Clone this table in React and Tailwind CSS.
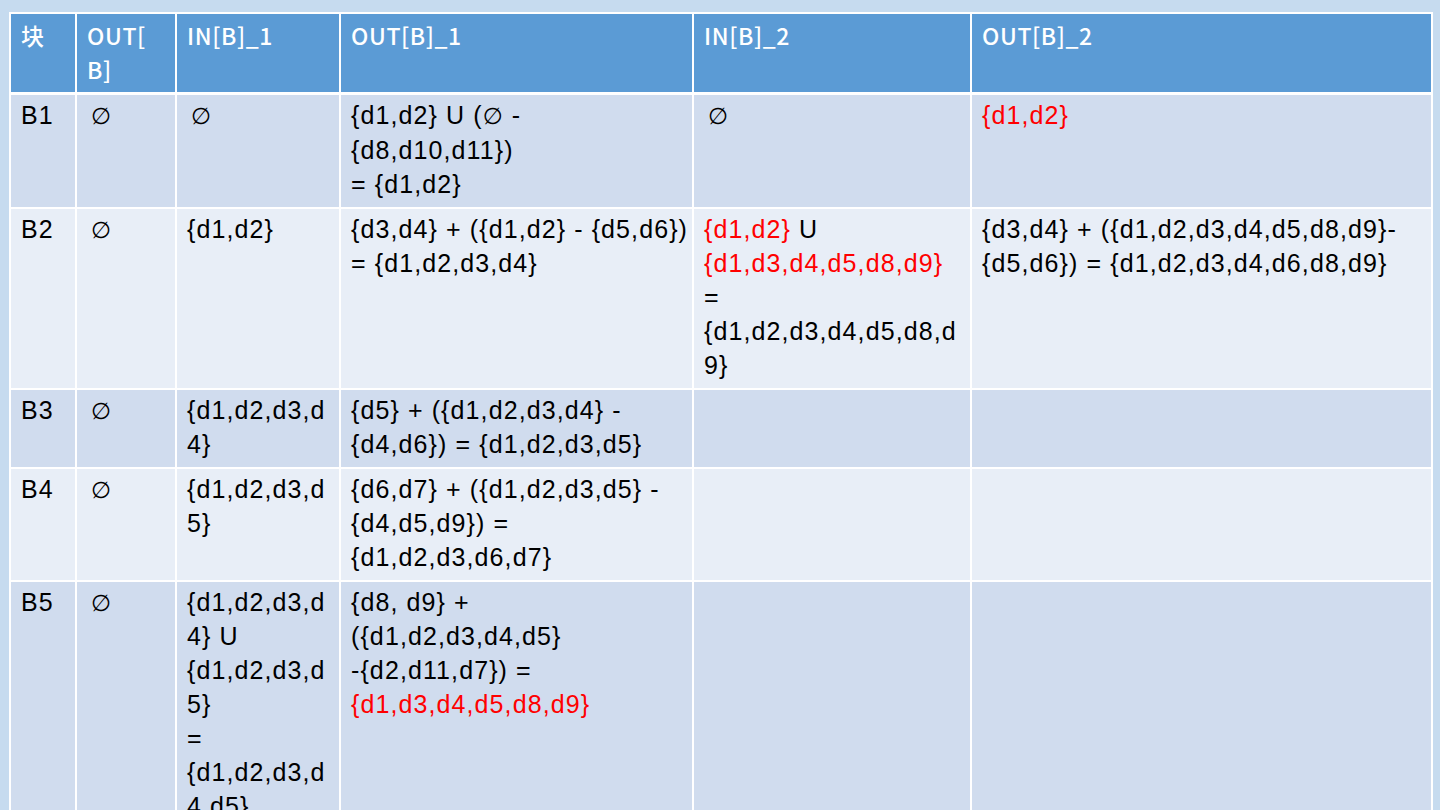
import React from 'react';

const R = ({ children }) => <span className="text-[#ff0000]">{children}</span>;
const E = () => <span className="ml-[4px] text-[23px]">∅</span>;

const headers = ['块', ['OUT[', 'B]'], 'IN[B]_1', 'OUT[B]_1', 'IN[B]_2', 'OUT[B]_2'];

// each cell is a list of lines so the wrapping matches the slide
const rows = [
  {
    bg: 'bg-[#d0dcee]',
    cells: [
      ['B1'],
      [<E />],
      [<E />],
      [<>{'{d1,d2} U ('}<span className="text-[23px]">∅</span>{' -'}</>, '{d8,d10,d11})', '= {d1,d2}'],
      [<E />],
      [<R>{'{d1,d2}'}</R>],
    ],
  },
  {
    bg: 'bg-[#e8eef7]',
    cells: [
      ['B2'],
      [<E />],
      ['{d1,d2}'],
      ['{d3,d4} + ({d1,d2} - {d5,d6})', '= {d1,d2,d3,d4}'],
      [
        <><R>{'{d1,d2}'}</R> U</>,
        <R>{'{d1,d3,d4,d5,d8,d9}'}</R>,
        '=',
        '{d1,d2,d3,d4,d5,d8,d',
        '9}',
      ],
      ['{d3,d4} + ({d1,d2,d3,d4,d5,d8,d9}-', '{d5,d6}) = {d1,d2,d3,d4,d6,d8,d9}'],
    ],
  },
  {
    bg: 'bg-[#d0dcee]',
    cells: [
      ['B3'],
      [<E />],
      ['{d1,d2,d3,d', '4}'],
      ['{d5} + ({d1,d2,d3,d4} -', '{d4,d6}) = {d1,d2,d3,d5}'],
      [],
      [],
    ],
  },
  {
    bg: 'bg-[#e8eef7]',
    cells: [
      ['B4'],
      [<E />],
      ['{d1,d2,d3,d', '5}'],
      ['{d6,d7} + ({d1,d2,d3,d5} -', '{d4,d5,d9}) =', '{d1,d2,d3,d6,d7}'],
      [],
      [],
    ],
  },
  {
    bg: 'bg-[#d0dcee]',
    cells: [
      ['B5'],
      [<E />],
      ['{d1,d2,d3,d', '4} U', '{d1,d2,d3,d', '5}', '=', '{d1,d2,d3,d', '4,d5}'],
      ['{d8, d9} +', '({d1,d2,d3,d4,d5}', '-{d2,d11,d7}) =', <R>{'{d1,d3,d4,d5,d8,d9}'}</R>],
      [],
      [],
    ],
  },
];

const widths = ['w-[66px]', 'w-[100px]', 'w-[164px]', 'w-[353px]', 'w-[278px]', 'w-[461px]'];

export default function App() {
  return (
    <div className="h-[810px] w-[1440px] overflow-hidden bg-[#c6dbef] pl-[9px] pt-[12px]">
      <table className="table-fixed border-collapse border-2 border-white w-[1424px]">
        <colgroup>
          {widths.map((w, i) => (
            <col key={i} className={w} />
          ))}
        </colgroup>
        <thead>
          <tr className="bg-[#5b9bd5]">
            {headers.map((h, i) => (
              <th
                key={i}
                className="border-2 border-b-[3px] border-white px-[10px] pt-[4px] pb-[6px] text-left align-top text-[23px] font-medium leading-[34px] tracking-[0.6px] text-white"
                style={{ fontFamily: '"Noto Sans CJK SC", "Noto Sans", sans-serif' }}
              >
                {Array.isArray(h) ? h.map((l, j) => <div key={j}>{l}</div>) : h}
              </th>
            ))}
          </tr>
        </thead>
        <tbody>
          {rows.map((r, i) => (
            <tr key={i} className={r.bg}>
              {r.cells.map((lines, j) => (
                <td
                  key={j}
                  className="border-2 border-white px-[10px] pt-[3px] pb-[6px] align-top text-[25px] leading-[34px] tracking-[1.1px] text-black whitespace-nowrap"
                  style={{ fontFamily: '"Liberation Sans", Arial, "DejaVu Sans", sans-serif' }}
                >
                  {lines.map((l, k) => (
                    <div key={k}>{l}</div>
                  ))}
                </td>
              ))}
            </tr>
          ))}
        </tbody>
      </table>
    </div>
  );
}
